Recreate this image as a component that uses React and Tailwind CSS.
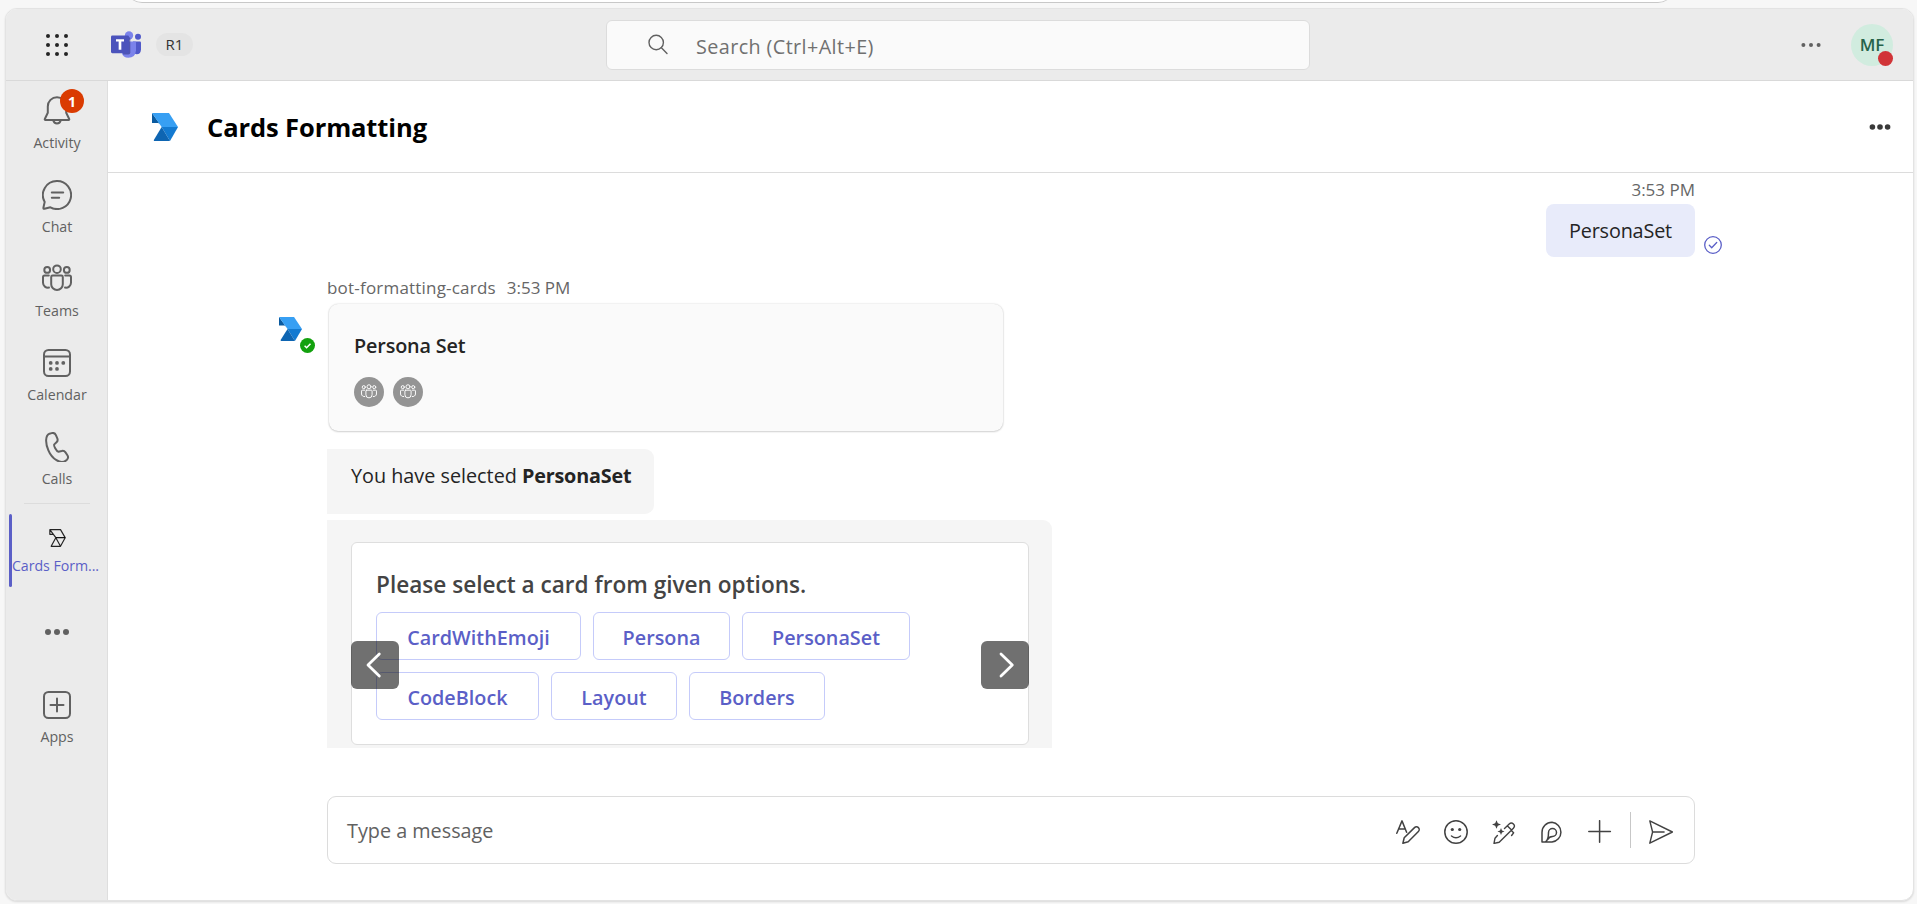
import React from 'react';

const BotLogo = ({ className }) => (
  <svg viewBox="0 0 78 84" preserveAspectRatio="none" className={className}>
    <path d="M0 0V30H19L24 34z" fill="#0a5a9f" />
    <path d="M0 0H51L78 42H29z" fill="#379ff3" />
    <path d="M29 42H78L54 84z" fill="#137ad1" />
    <path d="M29 42L54 84H7Q4 84 6 80z" fill="#0e65b2" />
  </svg>
);

const TeamsLogo = () => (
  <svg viewBox="0 0 90 80" className="h-[27px] w-[30px]">
    <circle cx="81" cy="17" r="9" fill="#5059c9" />
    <path d="M66 31H87Q90 31 90 34V54Q90 69 77 69Q70 69 66 64z" fill="#5059c9" />
    <circle cx="54" cy="13" r="12.5" fill="#7b83eb" />
    <path d="M34 31H72Q75 31 75 34V58Q73 80 52 80Q36 80 32 64z" fill="#7b83eb" />
    <path d="M40 18H55Q58 18 58 22V64Q58 70 52 70H36z" fill="#3d4299" opacity=".7" />
    <rect y="13" width="54" height="53" rx="4" fill="#4b53bc" />
    <path d="M15 24H39V31H31V56H23V31H15z" fill="#fff" />
  </svg>
);

const Icon = ({ className = 'size-[30px]', sw = 2, box = 30, children }) => (
  <svg viewBox={`0 0 ${box} ${box}`} className={`shrink-0 ${className}`} fill="none" stroke="currentColor" strokeWidth={sw} strokeLinecap="round" strokeLinejoin="round">{children}</svg>
);

const People = ({ className, sw }) => (
  <Icon className={className} sw={sw}>
    <circle cx="15" cy="5.2" r="3.8" />
    <circle cx="5.2" cy="5.9" r="2.9" />
    <circle cx="24.8" cy="5.9" r="2.9" />
    <path d="M10.6 11.6h8.8a1.4 1.4 0 0 1 1.4 1.4v7.2a5.8 5.8 0 0 1-11.6 0V13a1.4 1.4 0 0 1 1.4-1.4z" />
    <path d="M6.8 11.6H2.6A1.6 1.6 0 0 0 1 13.2v5.6a5 5 0 0 0 6 4.8M23.2 11.6h4.2a1.6 1.6 0 0 1 1.6 1.6v5.6a5 5 0 0 1-6 4.8" />
  </Icon>
);

const Dots = ({ className, r, gap }) => (
  <svg viewBox="0 0 30 8" className={`h-2 w-[30px] ${className}`} fill="currentColor">
    <circle cx={15 - gap} cy="4" r={r} /><circle cx="15" cy="4" r={r} /><circle cx={15 + gap} cy="4" r={r} />
  </svg>
);

const RailItem = ({ label, children }) => (
  <div className="flex h-[84px] flex-col items-center pl-px pt-[15px]">
    {children}
    <span className="mt-[6.5px] text-[14.2px] leading-5">{label}</span>
  </div>
);

const ActionButton = ({ children, className }) => (
  <button className={`flex h-12 items-center justify-center whitespace-nowrap rounded-md border border-[#c5cbfa] pt-[3px] text-[19.8px] font-semibold text-[#5b5fc7] ${className}`}>
    {children}
  </button>
);

export default function App() {
  return (
    <div className="flex h-[904px] w-full flex-col overflow-hidden bg-[#f7f7f7] pl-[5px] pr-[3px] font-['Open_Sans','Noto_Sans',sans-serif] text-[#242424]">
      <div className="-mt-[37px] ml-[121px] h-10 w-[1548px] shrink-0 rounded-b-[16px] border-b-[1.5px] border-[#c8c8c8] bg-white" />
      <div className="mt-[5px] flex h-[893px] shrink-0 flex-col overflow-hidden rounded-[12px] border border-[#e3e3e3] bg-white shadow-[0_1px_2px_rgba(0,0,0,0.12)]">
        <header className="flex h-[72px] shrink-0 items-center border-b border-[#d9d9d9] bg-[#ebebeb]">
          <svg viewBox="0 0 24 24" className="ml-[39px] size-6" fill="#242424">
            {[3, 12, 21].map((y) => [3, 12, 21].map((x) => <circle key={`${x}-${y}`} cx={x} cy={y} r="2" />))}
          </svg>
          <div className="ml-[42px]"><TeamsLogo /></div>
          <span className="ml-[15px] flex h-[23px] w-[37px] items-center justify-center rounded-full bg-[#e4e4e4] text-[15px] text-[#333]">R1</span>
          <div className="ml-[413px] flex h-[50px] w-[704px] items-center rounded-md border border-[#dcdcdc] bg-[#fafafa]">
            <Icon className="ml-[41px] size-[22px] text-[#616161]" box={22} sw={1.4}><circle cx="8.2" cy="8.5" r="7.2" /><path d="M13.4 13.8L19 19.500" /></Icon>
            <span className="ml-[26px] pt-[4px] text-[19.8px] tracking-[0.4px] text-[#707070]">Search (Ctrl+Alt+E)</span>
          </div>
          <Dots className="ml-[486px] text-[#616161]" r={2} gap={7.6} />
          <div className="relative ml-[25px] flex size-[42px] items-center justify-center rounded-full bg-[#d1ecdf] text-[17px] font-semibold text-[#27634a]">
            MF
            <span className="absolute bottom-0 right-0 size-[15px] rounded-full bg-[#d13438]" />
          </div>
        </header>
        <div className="flex min-h-0 flex-1">
          <nav className="flex w-[102px] shrink-0 flex-col border-r border-[#dedede] bg-[#ebebeb] text-[#616161]">
            <RailItem label="Activity">
              <div className="relative">
                <Icon><path d="M15 1.2a9.2 9.2 0 0 1 9.2 9.2v6.4l3 6.2q.4 1-.7 1H3.500q-1.100 0-.7-1l3-6.200v-6.400A9.200 9.200 0 0 1 15 1.200z" /><path d="M11.300 24.500a3.800 3.800 0 0 0 7.400 0" /></Icon>
                <span className="absolute -top-[7px] left-[18px] flex size-6 items-center justify-center rounded-full bg-[#da3b01] text-[14px] font-bold text-white">1</span>
              </div>
            </RailItem>
            <RailItem label="Chat"><Icon><path d="M15 1a14 14 0 1 1-6.600 26.300L2.500 28.800q-1.300.3-1.100-1L2.700 21.900A14 14 0 0 1 15 1zM9.800 12.500h11.400M9.800 17.700h7.400" /></Icon></RailItem>
            <RailItem label="Teams"><People /></RailItem>
            <RailItem label="Calendar">
              <Icon><rect x="2" y="2" width="26" height="26" rx="4.500" /><path d="M2 8.600h26" /><g fill="currentColor" stroke="none"><circle cx="8.700" cy="14.900" r="1.900" /><circle cx="15" cy="14.900" r="1.900" /><circle cx="21.300" cy="14.900" r="1.900" /><circle cx="8.700" cy="20.900" r="1.900" /><circle cx="15" cy="20.900" r="1.900" /></g></Icon>
            </RailItem>
            <RailItem label="Calls"><Icon><path d="M7.500 1.700l2.200-.6a3.600 3.600 0 0 1 4.200 2l1.400 3.200a3.600 3.600 0 0 1-.8 4L12.300 12.400c-.9 1 1.900 6.900 4.200 7.300l3.200-.7a3.600 3.600 0 0 1 3.800 1.400l1.900 2.800a3.600 3.600 0 0 1-.5 4.500l-.9.8c-5.300 4.600-14.200-2-17.600-10.200C3.200 11 3.200 3.500 7.500 1.700z" /></Icon></RailItem>
            <div className="ml-[18px] mt-[2px] h-px w-[66px] shrink-0 bg-[#dcdcdc]" />
            <div className="ml-[3px] mt-[10px] flex h-[73px] shrink-0 items-start">
              <div className="h-full w-[3px] shrink-0 rounded-full bg-[#5b5fc7]" />
              <div className="flex w-[87px] flex-col items-center pt-[15px]">
                <svg viewBox="0 0 50 54" className="ml-[4px] h-[18px] w-[17px]" fill="none" stroke="#242424" strokeWidth="3.500" strokeLinejoin="round"><path d="M2 2H34L48 26L34 52H6L20 26zM2 2V16H12M20 26L34 52" /><path d="M20 26H48" stroke="#000" /></svg>
                <span className="mt-[8.500px] whitespace-nowrap text-[14.200px] leading-5 tracking-[-0.05px] text-[#5b5fc7]">Cards Form...</span>
              </div>
            </div>
            <Dots className="ml-[36px] mt-[41px] shrink-0" r={3} gap={9} />
            <div className="mt-[39px]">
              <RailItem label="Apps"><Icon><rect x="2" y="2" width="26" height="26" rx="4.500" /><path d="M15 8.500v13M8.500 15h13" /></Icon></RailItem>
            </div>
          </nav>
          <main className="flex min-w-0 flex-1 flex-col">
            <div className="flex h-[92px] shrink-0 items-center border-b border-[#dcdcdc]">
              <BotLogo className="ml-[44px] h-7 w-[26px]" />
              <h1 className="ml-[29px] pt-[2px] text-[25.500px] font-bold tracking-[-0.1px] text-black">Cards Formatting</h1>
              <Dots className="ml-auto mr-[18px] text-[#3a3a3a]" r={2.800} gap={7.600} />
            </div>
            <div className="flex w-[1587px] flex-1 flex-col pl-[171px]">
              <div className="mt-[3px] flex flex-col items-end">
                <span className="text-[17px] leading-[27px] text-[#666]">3:53 PM</span>
                <div className="relative mt-px flex h-[53px] w-[149px] items-center justify-center rounded-lg bg-[#e8ebfa] text-[19.800px] tracking-[-0.15px]">
                  PersonaSet
                  <Icon className="absolute -right-[27px] bottom-[3px] size-[18px] text-[#5b5fc7]" box={18} sw={1.300}><circle cx="9" cy="9" r="8.300" /><path d="M5.300 9.300l2.400 2.400 5-5.200" /></Icon>
                </div>
              </div>
              <div className="mt-[17px] flex">
                <div className="w-12 shrink-0 pt-[43px]">
                  <div className="relative w-[36px]">
                    <BotLogo className="h-6 w-[23px]" />
                    <svg viewBox="0 0 15 15" className="absolute left-[21px] top-[21px] size-[15px]"><circle cx="7.500" cy="7.500" r="7.500" fill="#13a10e" /><path d="M4.600 7.700l2 2 3.900-4" fill="none" stroke="#fff" strokeWidth="1.500" /></svg>
                  </div>
                </div>
                <div className="flex-1">
                  <div className="flex gap-[11px] text-[17px] leading-[27px] text-[#666]"><span className="tracking-[0.2px]">bot-formatting-cards</span><span>3:53 PM</span></div>
                  <section className="ml-[2px] mt-[3px] h-[127px] w-[674px] rounded-[9px] bg-[#fafafa] px-[25px] pt-[26px] shadow-[0_0_2px_rgba(0,0,0,0.18),0_1px_2px_rgba(0,0,0,0.14)]">
                    <h2 className="text-[19.800px] font-semibold leading-[32px] tracking-[-0.15px]">Persona Set</h2>
                    <div className="mt-[15px] flex gap-[9px] text-white">
                      {[0, 1].map((i) => <span key={i} className="flex size-[30px] items-center justify-center rounded-full bg-[#949494]"><People className="size-[16px]" sw={1.800} /></span>)}
                    </div>
                  </section>
                  <div className="mt-[18px] h-[65px] w-[327px] whitespace-nowrap rounded-r-[9px] bg-[#f5f5f5] pl-6 pt-[12px] text-[19.800px] leading-[30px]">
                    You have selected <b className="tracking-[-0.2px]">PersonaSet</b>
                  </div>
                  <div className="mt-[6px] h-[228px] w-[725px] rounded-tr-[9px] bg-[#f5f5f5] pl-6 pt-[22px]">
                    <section className="relative h-[203px] w-[678px] rounded-md border border-[#dedede] bg-white px-6 pt-[26px]">
                      <h2 className="text-[22.600px] font-semibold leading-[32px] text-[#444]">Please select a card from given options.</h2>
                      <div className="mt-[11px] flex gap-3">
                        <ActionButton className="w-[205px]">CardWithEmoji</ActionButton>
                        <ActionButton className="w-[137px]">Persona</ActionButton>
                        <ActionButton className="w-[168px]">PersonaSet</ActionButton>
                      </div>
                      <div className="mt-3 flex gap-3">
                        <ActionButton className="w-[163px]">CodeBlock</ActionButton>
                        <ActionButton className="w-[126px]">Layout</ActionButton>
                        <ActionButton className="w-[136px]">Borders</ActionButton>
                      </div>
                      <button className="absolute -left-px top-[98px] size-12 rounded-md bg-black/56 text-white"><Icon className="size-12" box={48} sw={2.800}><path d="M28.300 13L17 24l11.300 11" /></Icon></button>
                      <button className="absolute -right-px top-[98px] size-12 rounded-md bg-black/56 text-white"><Icon className="size-12" box={48} sw={2.800}><path d="M20 13l11.300 11L20 35" /></Icon></button>
                    </section>
                  </div>
                </div>
              </div>
              <div className="ml-12 mt-12 flex h-[68px] items-center rounded-[9px] border border-[#dcdcdc] text-[#424242]">
                <span className="ml-[19px] mr-auto pt-px text-[19.800px] text-[#616161]">Type a message</span>
                <div className="flex items-center gap-6 pt-[3px]">
                  <Icon className="size-6" box={24} sw={1.500}><path d="M.8 13.300L6 .9l4.600 11.400M2.500 9h6.900" /><path d="M6.900 23.200l1.300-5.400L18.500 7.600a2.700 2.700 0 0 1 3.900 3.900L12.200 21.700z" /></Icon>
                  <Icon className="size-6" box={24} sw={1.500}><circle cx="12" cy="12" r="11.200" /><path d="M7.500 16q4.500 3.400 9 0" /><g fill="currentColor" stroke="none"><circle cx="8.300" cy="9.500" r="1.600" /><circle cx="15.700" cy="9.500" r="1.600" /></g></Icon>
                  <Icon className="size-6" box={24} sw={1.400}><path d="M4.500.2l1.300 3 3.200 1.300-3.200 1.300-1.300 3-1.300-3L0 4.500l3.200-1.300zM9 8l1 2.400 2.500 1-2.500 1L9 15l-1-2.600-2.500-1 2.500-1z" fill="currentColor" stroke="none" /><path d="M5.400 15.500L3 18.200l-1 5.200 5.200-1.200L21.400 8.200a2.900 2.900 0 0 0-4.200-4.200L12.500 8.500M15.500 6l3.800 3.800M19.300 10.500l2.300 2.300-2 2.700" /></Icon>
                  <Icon className="size-6" box={24} sw={1.500}><path d="M2 22V12.500A10 10 0 0 1 12 2.300a9.900 9.900 0 0 1 0 19.700zM5.500 21.800Q8.500 20 8.500 12.500a4 4 0 1 1 4 4q-3.300 0-4.700 3" /></Icon>
                  <Icon className="size-6" box={24} sw={1.500}><path d="M11.600.7v21.600M.8 11.500h21.600" /></Icon>
                </div>
                <span className="ml-[18px] h-9 w-px bg-[#c7c7c7]" />
                <Icon className="ml-[18px] mr-[21px] mt-[3px] size-6" box={24} sw={1.400}><path d="M.8.900L23.400 12 .8 23.200 3.600 12zM3.600 12h11.500" /></Icon>
              </div>
            </div>
          </main>
        </div>
      </div>
    </div>
  );
}
